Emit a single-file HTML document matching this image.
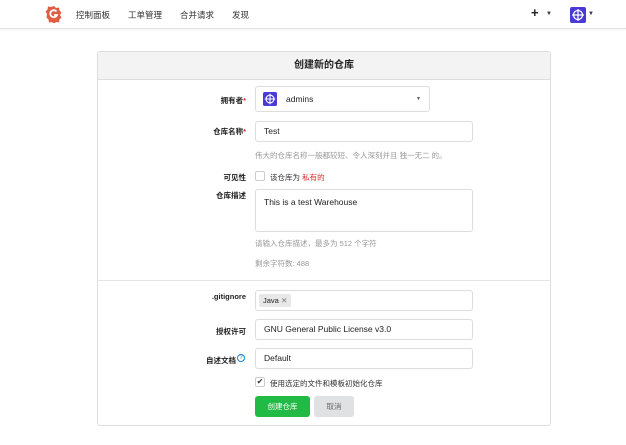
<!DOCTYPE html>
<html><head><meta charset="utf-8"><style>
*{box-sizing:border-box;margin:0;padding:0}
body{width:626px;height:445px;background:#fff;font-family:"Liberation Sans","Noto Sans CJK SC",sans-serif;font-size:8px;color:#333;position:relative;overflow:hidden}
.abs{position:absolute}
.hdr{left:0;top:0;width:626px;height:29px;border-bottom:1px solid #e3e3e3;box-shadow:0 1px 2px rgba(0,0,0,.05)}
.nav{top:9px;font-size:8.5px;color:#333}
.card{left:97px;top:51px;width:454px;height:375px;border:1px solid #ddd;border-radius:3px}
.ch{left:0;top:0;width:452px;height:28px;background:#f3f3f3;border-bottom:1px solid #ddd;text-align:center;line-height:28px;font-size:10px;font-weight:bold;color:#222}
.lbl{width:150px;text-align:right;font-weight:bold;color:#222;font-size:7.5px}
.inp{border:1px solid #ddd;border-radius:3px;background:#fff;font-size:8.5px;color:#222;padding-left:8px}
.help{font-size:7.5px;color:#999}
.star{color:#db2828}
</style></head><body>
<div class="abs hdr"></div>
<svg class="abs" style="left:45px;top:5px" width="18" height="18" viewBox="0 0 18 18"><path d="M9 1l2 2 3-.5.5 3 2 2-1.5 2.5 1.5 2.5-2 2-.5 3-3-.5-2 2-2-2-3 .5-.5-3-2-2L2 9 .5 6.5l2-2 .5-3 3 .5z" fill="#e05d44"/><path d="M11.5 6.5A3.5 3.5 0 1 0 12 10H9" stroke="#fff" stroke-width="1.8" fill="none"/></svg>
<div class="abs nav" style="left:76px">控制面板</div>
<div class="abs nav" style="left:128px">工单管理</div>
<div class="abs nav" style="left:180px">合并请求</div>
<div class="abs nav" style="left:232px">发现</div>
<div class="abs" style="left:531px;top:5px;font-size:13px;font-weight:bold;color:#222">+</div>
<div class="abs" style="left:546px;top:11px;font-size:6px">▼</div>
<svg class="abs" style="left:570px;top:7px" width="16" height="16" viewBox="0 0 16 16"><rect width="16" height="16" rx="2" fill="#4a3ad6"/><circle cx="8" cy="8" r="4.5" stroke="#fff" fill="none" stroke-width="1.3"/><path d="M8 2v12M2 8h12" stroke="#fff" stroke-width="1.2"/></svg>
<div class="abs" style="left:588px;top:11px;font-size:6px">▼</div>

<div class="abs card"><div class="abs ch">创建新的仓库</div></div>

<div class="abs lbl" style="left:96px;top:95px">拥有者<span class="star">*</span></div>
<div class="abs inp" style="left:255px;top:86px;width:175px;height:26px;line-height:24px;padding-left:30px">admins<span style="position:absolute;right:8px;font-size:5px;color:#555">▼</span></div>
<svg class="abs" style="left:263px;top:92px" width="14" height="14" viewBox="0 0 16 16"><rect width="16" height="16" rx="2" fill="#4a3ad6"/><circle cx="8" cy="8" r="4.5" stroke="#fff" fill="none" stroke-width="1.3"/><path d="M8 2v12M2 8h12" stroke="#fff" stroke-width="1.2"/></svg>

<div class="abs lbl" style="left:96px;top:126px">仓库名称<span class="star">*</span></div>
<div class="abs inp" style="left:255px;top:121px;width:218px;height:21px;line-height:19px">Test</div>
<div class="abs help" style="left:255px;top:150px">伟大的仓库名称一般都较短、令人深刻并且 独一无二 的。</div>

<div class="abs lbl" style="left:96px;top:172px">可见性</div>
<div class="abs" style="left:255px;top:171px;width:10px;height:10px;border:1px solid #ccc;border-radius:2px"></div>
<div class="abs" style="left:270px;top:172px;font-size:7.5px">该仓库为 <span style="color:#db2828">私有的</span></div>

<div class="abs lbl" style="left:96px;top:190px">仓库描述</div>
<div class="abs inp" style="left:255px;top:189px;width:218px;height:43px;padding-top:7px">This is a test Warehouse</div>
<div class="abs help" style="left:255px;top:238px">请输入仓库描述，最多为 512 个字符</div>
<div class="abs help" style="left:255px;top:258px">剩余字符数: 488</div>

<div class="abs" style="left:98px;top:280px;width:452px;height:1px;background:#e5e5e5"></div>

<div class="abs lbl" style="left:96px;top:292px">.gitignore</div>
<div class="abs inp" style="left:255px;top:290px;width:218px;height:21px;padding-left:3px;padding-top:3px"><span style="display:inline-block;background:#e8e8e8;border-radius:2px;padding:2px 4px;font-size:7.5px">Java <span style="color:#777">✕</span></span></div>

<div class="abs lbl" style="left:96px;top:326px">授权许可</div>
<div class="abs inp" style="left:255px;top:319px;width:218px;height:21px;line-height:19px">GNU General Public License v3.0</div>

<div class="abs lbl" style="left:86px;top:355px">自述文档</div>
<div class="abs" style="left:237px;top:354px;width:8px;height:8px;border:1px solid #2185d0;border-radius:50%;color:#2185d0;font-size:6px;line-height:6px;text-align:center">?</div>
<div class="abs inp" style="left:255px;top:348px;width:218px;height:21px;line-height:19px">Default</div>

<div class="abs" style="left:255px;top:377px;width:10px;height:10px;border:1px solid #ccc;border-radius:2px;font-size:8px;line-height:8px;text-align:center">✔</div>
<div class="abs" style="left:270px;top:378px;font-size:7.5px">使用选定的文件和模板初始化仓库</div>

<div class="abs" style="left:255px;top:396px;width:55px;height:21px;background:#21ba45;border-radius:3px;color:#fff;text-align:center;line-height:21px;font-size:7.5px">创建仓库</div>
<div class="abs" style="left:314px;top:396px;width:40px;height:21px;background:#e0e1e2;border-radius:3px;color:#666;text-align:center;line-height:21px;font-size:7.5px">取消</div>
</body></html>
